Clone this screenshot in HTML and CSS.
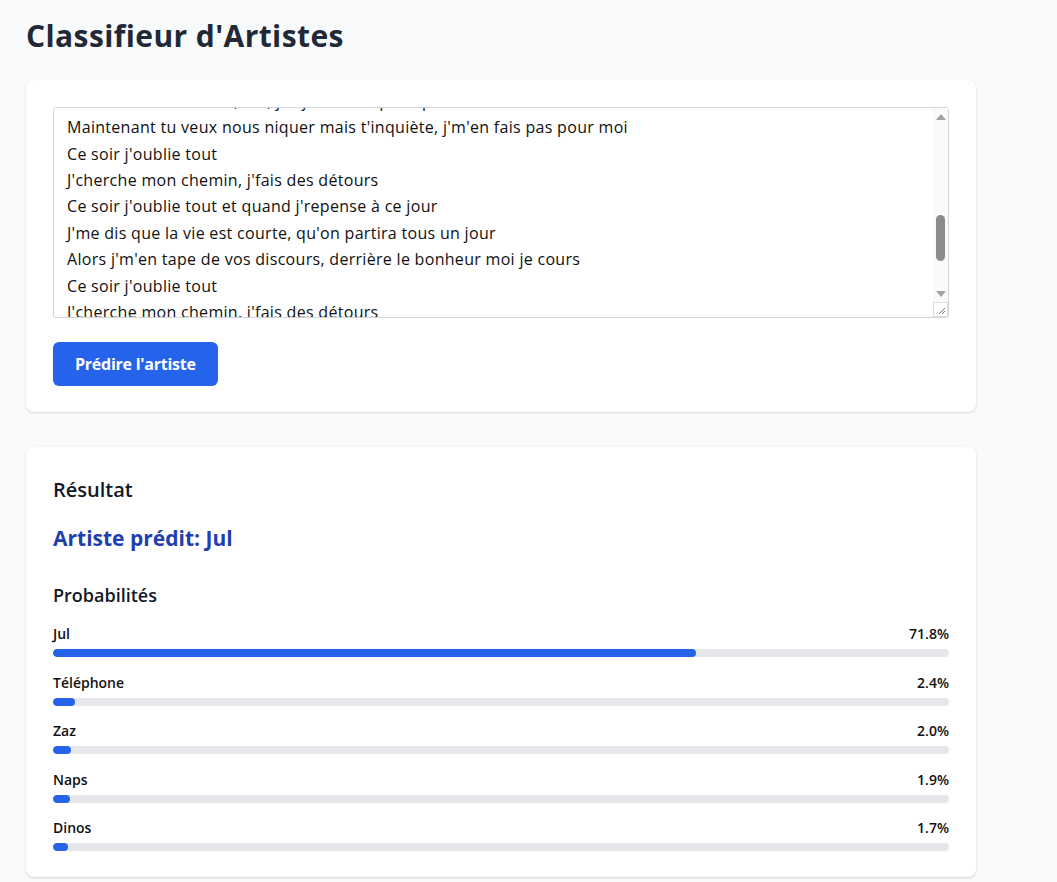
FILE: index.html
```html
<!DOCTYPE html>
<html lang="fr">
<head>
<meta charset="utf-8">
<title>Classifieur d'Artistes</title>
<link rel="stylesheet" href="styles.css">
</head>
<body>
<main class="container">
  <h1 class="title">Classifieur d'Artistes</h1>
  <section class="card input-card">
    <div class="lyrics-box">
      <textarea class="lyrics" id="lyrics" spellcheck="false">Ouais, c'est l'histoire d'un mec du quartier
J'ai grandi là-bas, j'ai jamais triché
Les potos au bloc, la nuit on tient les murs
On rêvait de soleil, de grosses voitures
Maman m'a dit « fais attention à toi »
J'ai pas écouté, j'ai suivi mes pas
Y'a des jours sans, y'a des jours avec
Ce soir j'oublie tout
J'cherche mon chemin, j'fais des détours
Ce soir j'oublie tout et quand j'repense à ce jour
J'me dis que la vie est courte, qu'on partira tous un jour
Alors j'm'en tape de vos discours, derrière le bonheur moi je cours
On a connu la galère, les fins de mois
On a partagé le pain, on s'est serré les bras
Tu m'as tourné le dos, oui, j'ai jamais su pourquoi
Maintenant tu veux nous niquer mais t'inquiète, j'm'en fais pas pour moi
Ce soir j'oublie tout
J'cherche mon chemin, j'fais des détours
Ce soir j'oublie tout et quand j'repense à ce jour
J'me dis que la vie est courte, qu'on partira tous un jour
Alors j'm'en tape de vos discours, derrière le bonheur moi je cours
Ce soir j'oublie tout
J'cherche mon chemin, j'fais des détours
Ce soir j'oublie tout et quand j'repense à ce jour
J'me dis que la vie est courte, qu'on partira tous un jour
Alors j'm'en tape de vos discours, derrière le bonheur moi je cours
Ce soir j'oublie tout</textarea>
      <div class="fake-scrollbar" aria-hidden="true">
        <span class="sb-arrow sb-up"></span>
        <span class="sb-track"><span class="sb-thumb"></span></span>
        <span class="sb-arrow sb-down"></span>
      </div>
    </div>
    <button class="btn" type="button">Prédire l'artiste</button>
  </section>
  <section class="card result-card">
    <h2 class="result-heading">Résultat</h2>
    <p class="prediction">Artiste prédit: Jul</p>
    <h3 class="prob-heading">Probabilités</h3>
    <ul class="probs">
      <li class="prob">
        <div class="prob-row"><span class="prob-name">Jul</span><span class="prob-value">71.8%</span></div>
        <div class="track"><div class="fill" style="width:71.8%"></div></div>
      </li>
      <li class="prob">
        <div class="prob-row"><span class="prob-name">Téléphone</span><span class="prob-value">2.4%</span></div>
        <div class="track"><div class="fill" style="width:2.4%"></div></div>
      </li>
      <li class="prob">
        <div class="prob-row"><span class="prob-name">Zaz</span><span class="prob-value">2.0%</span></div>
        <div class="track"><div class="fill" style="width:2.0%"></div></div>
      </li>
      <li class="prob">
        <div class="prob-row"><span class="prob-name">Naps</span><span class="prob-value">1.9%</span></div>
        <div class="track"><div class="fill" style="width:1.9%"></div></div>
      </li>
      <li class="prob">
        <div class="prob-row"><span class="prob-name">Dinos</span><span class="prob-value">1.7%</span></div>
        <div class="track"><div class="fill" style="width:1.7%"></div></div>
      </li>
    </ul>
  </section>
</main>
<script src="script.js"></script>
</body>
</html>
```

FILE: styles.css
```css
* {
  box-sizing: border-box;
}

html, body {
  margin: 0;
  padding: 0;
  background: #f9fafb;
  font-family: "Open Sans", "Noto Sans", "Liberation Sans", sans-serif;
  color: #111827;
}

.container {
  width: 950px;
  margin-left: 26px;
  padding-top: 18px;
  padding-bottom: 40px;
}

.title {
  margin: 0 0 26px 0;
  font-size: 30px;
  line-height: 36px;
  font-weight: 700;
  letter-spacing: 0.4px;
  color: #1f2937;
}

.card {
  background: #ffffff;
  border-radius: 8px;
  box-shadow: 0 1px 3px rgba(0, 0, 0, 0.1), 0 1px 2px rgba(0, 0, 0, 0.06);
  padding: 27px 27px 26px 27px;
}

.lyrics-box {
  position: relative;
}

.lyrics {
  display: block;
  width: 100%;
  height: 211px;
  padding: 12px 28px 12px 13px;
  border: 1px solid #d1d5db;
  border-radius: 3px;
  font-family: inherit;
  font-size: 16px;
  line-height: 26.4px;
  letter-spacing: 0.3px;
  color: #111111;
  resize: vertical;
  background: #ffffff;
  overflow-y: scroll;
}

.lyrics::-webkit-resizer {
  background: #ffffff url("data:image/svg+xml;utf8,<svg xmlns='http://www.w3.org/2000/svg' width='15' height='15'><rect x='0.5' y='0.5' width='14' height='14' fill='none' stroke='%23dcdcdc'/><path d='M12 6L6 12M12 9L9 12' stroke='%23777' stroke-width='1'/></svg>") center no-repeat;
}

.fake-scrollbar {
  position: absolute;
  top: 1px;
  right: 1px;
  bottom: 16px;
  width: 15px;
  display: flex;
  flex-direction: column;
  background: #fafafa;
  pointer-events: none;
}

.sb-arrow {
  display: flex;
  height: 17px;
  flex: none;
  align-items: center;
  justify-content: center;
}

.sb-arrow::before {
  content: "";
  width: 0;
  height: 0;
  border-left: 5px solid transparent;
  border-right: 5px solid transparent;
}

.sb-up::before {
  border-bottom: 6px solid #a3a3a3;
}

.sb-down::before {
  border-top: 6px solid #a3a3a3;
}

.sb-track {
  flex: 1;
  display: block;
  position: relative;
}

.sb-thumb {
  display: block;
  width: 9px;
  height: 46px;
  margin: 90px auto 0 auto;
  background: #8b8b8b;
  border-radius: 5px;
}

.btn {
  display: block;
  margin-top: 24px;
  height: 44px;
  padding: 0 22px;
  background: #2563eb;
  color: #ffffff;
  border: none;
  border-radius: 6px;
  font-family: inherit;
  font-size: 16px;
  font-weight: 700;
  letter-spacing: -0.25px;
  cursor: pointer;
}

.result-card {
  margin-top: 35px;
  padding-top: 29px;
}

.result-heading {
  margin: 0;
  font-size: 20px;
  line-height: 28px;
  font-weight: 600;
  color: #111827;
}

.prediction {
  margin: 20px 0 0 0;
  font-size: 21px;
  line-height: 28px;
  font-weight: 700;
  color: #1e40af;
}

.prob-heading {
  margin: 29px 0 0 0;
  font-size: 18px;
  line-height: 28px;
  font-weight: 600;
  color: #111827;
}

.probs {
  list-style: none;
  margin: 15px 0 0 0;
  padding: 0;
  display: flex;
  flex-direction: column;
  gap: 15.5px;
}

.prob-row {
  display: flex;
  justify-content: space-between;
  font-size: 14px;
  line-height: 20px;
  font-weight: 600;
  color: #111111;
  margin-bottom: 5px;
}

.track {
  height: 8px;
  background: #e5e7eb;
  border-radius: 9999px;
  overflow: hidden;
}

.fill {
  height: 100%;
  background: #2563eb;
  border-radius: 9999px;
}
```

FILE: script.js
```js
var ta = document.getElementById('lyrics');
ta.scrollTop = 6.2 + 26.4 * 15;
```
